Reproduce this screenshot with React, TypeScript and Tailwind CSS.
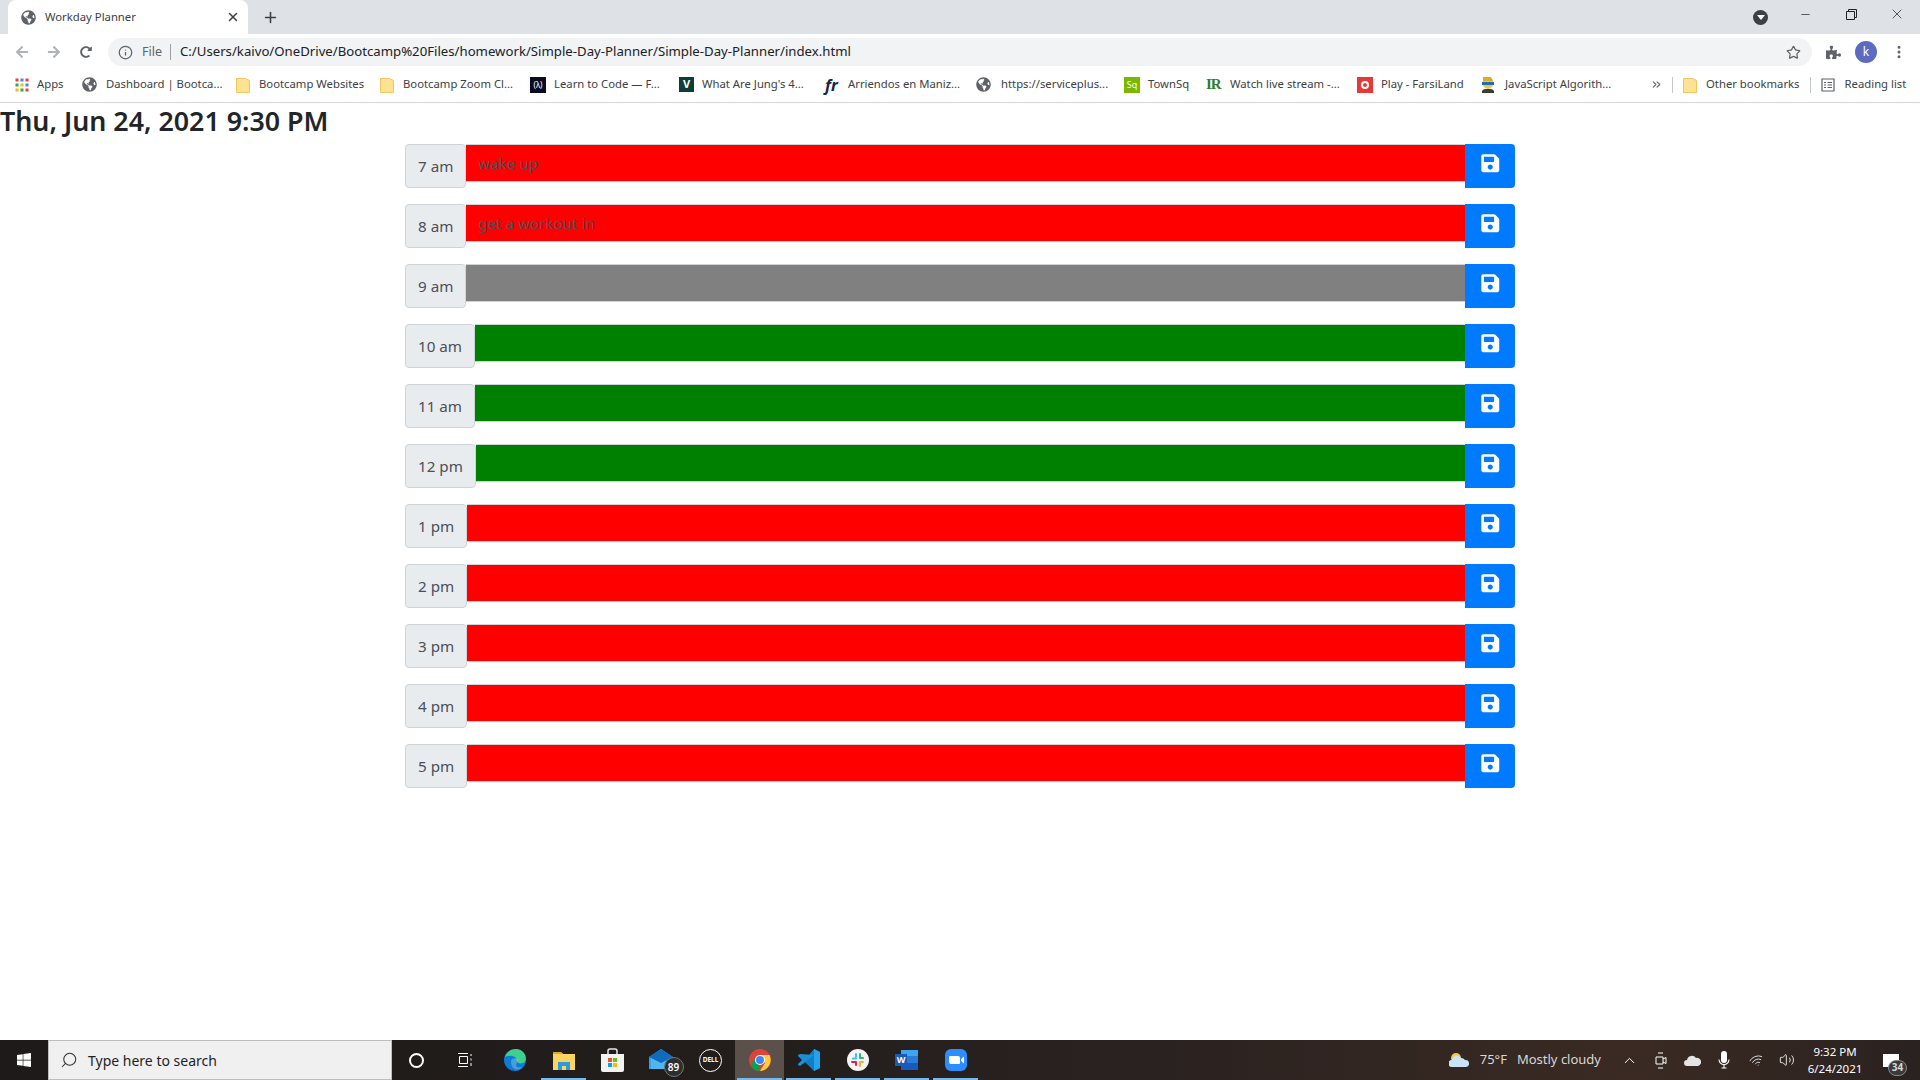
import React from "react";
import {
  FaSave,
  FaGlobeAmericas,
  FaArrowLeft,
  FaArrowRight,
  FaRedoAlt,
  FaPuzzlePiece,
  FaWindows,
} from "react-icons/fa";
import {
  Info,
  Star,
  X,
  Plus,
  Minus,
  Search,
  ChevronUp,
  Volume2,
  Wifi,
  ChevronsRight,
  MoreVertical,
} from "lucide-react";

const UI_FONT = "font-['Noto_Sans','Open_Sans',sans-serif]";

const Folder = () => (
  <svg width="14" height="16" viewBox="0 0 14 16" className="shrink-0">
    <path d="M.5 1.5h9l4 2v12H.5z" fill="#fde293" stroke="#f0c75e" />
  </svg>
);

const Globe = () => <FaGlobeAmericas className="text-[#5f6368] text-[15px] shrink-0" />;

const AppsGrid = () => (
  <svg width="14" height="14" viewBox="0 0 14 14" className="shrink-0">
    {[
      "#ea4335", "#4285f4", "#ea4335",
      "#34a853", "#fbbc04", "#4285f4",
      "#fbbc04", "#34a853", "#ea4335",
    ].map((c, i) => (
      <rect key={i} x={(i % 3) * 5 + 0.5} y={Math.floor(i / 3) * 5 + 0.5} width="3" height="3" fill={c} />
    ))}
  </svg>
);

const bookmarks = [
  { icon: <AppsGrid />, label: "Apps", box: "w-[67px] ml-[15px]", gap: "gap-[8px]" },
  { icon: <Globe />, label: "Dashboard | Bootca...", box: "w-[154px]", gap: "gap-[9px]" },
  { icon: <Folder />, label: "Bootcamp Websites", box: "w-[144px]", gap: "gap-[9px]" },
  { icon: <Folder />, label: "Bootcamp Zoom Cl...", box: "w-[150px]", gap: "gap-[9px]" },
  {
    icon: (
      <span className="w-[16px] h-[16px] bg-[#0a0a23] text-white text-[8px] flex items-center justify-center shrink-0">
        (λ)
      </span>
    ),
    label: "Learn to Code — F...",
    box: "w-[149px]",
    gap: "gap-[8px]",
  },
  {
    icon: (
      <span className="w-[15px] h-[15px] bg-[#0f3d3a] text-white font-bold text-[11px] flex items-center justify-center shrink-0">
        V
      </span>
    ),
    label: "What Are Jung's 4...",
    box: "w-[146px]",
    gap: "gap-[8px]",
  },
  {
    icon: (
      <span className="w-[16px] text-[#14234f] font-bold italic text-[16px] leading-none shrink-0">fr</span>
    ),
    label: "Arriendos en Maniz...",
    box: "w-[151px]",
    gap: "gap-[7px]",
  },
  { icon: <Globe />, label: "https://serviceplus...", box: "w-[148px]", gap: "gap-[10px]" },
  {
    icon: (
      <span className="w-[16px] h-[16px] bg-[#7ab800] text-white text-[9px] flex items-center justify-center shrink-0">
        Sq
      </span>
    ),
    label: "TownSq",
    box: "w-[82px]",
    gap: "gap-[8px]",
  },
  {
    icon: (
      <span className="w-[17px] text-[#2e7d32] font-['Liberation_Serif',serif] font-bold text-[15px] leading-none tracking-[-1px] shrink-0">
        IR
      </span>
    ),
    label: "Watch live stream -...",
    box: "w-[151px]",
    gap: "gap-[7px]",
  },
  {
    icon: (
      <span className="w-[16px] h-[16px] bg-[#e53935] flex items-center justify-center shrink-0">
        <span className="w-[8px] h-[8px] rounded-full border-2 border-white" />
      </span>
    ),
    label: "Play - FarsiLand",
    box: "w-[123px]",
    gap: "gap-[8px]",
  },
  {
    icon: (
      <svg width="16" height="17" viewBox="0 0 16 17" className="shrink-0">
        <path d="M2 15c1-3 11-3 12 0v2H2z" fill="#3b3b2f" />
        <circle cx="8" cy="7" r="5.5" fill="#f5c542" />
        <path d="M2 6h12v3H2z" fill="#1c6fb5" />
        <path d="M3 1h8l2 4H3z" fill="#e0a92a" />
      </svg>
    ),
    label: "JavaScript Algorith...",
    box: "w-[132px]",
    gap: "gap-[9px]",
  },
];

const hours = [
  { label: "7 am", color: "bg-[#ff0000]", text: "wake up" },
  { label: "8 am", color: "bg-[#ff0000]", text: "get a workout in" },
  { label: "9 am", color: "bg-[#808080]", text: "" },
  { label: "10 am", color: "bg-[#008000]", text: "" },
  { label: "11 am", color: "bg-[#008000]", text: "" },
  { label: "12 pm", color: "bg-[#008000]", text: "" },
  { label: "1 pm", color: "bg-[#ff0000]", text: "" },
  { label: "2 pm", color: "bg-[#ff0000]", text: "" },
  { label: "3 pm", color: "bg-[#ff0000]", text: "" },
  { label: "4 pm", color: "bg-[#ff0000]", text: "" },
  { label: "5 pm", color: "bg-[#ff0000]", text: "" },
];

const BrowserChrome = () => (
  <div className={`${UI_FONT} shrink-0`}>
    <div className="h-[34px] bg-[#dee1e6] flex items-end">
      <div className="ml-[8px] w-[240px] h-[34px] bg-white rounded-t-[8px] flex items-center pl-[13px] pr-[8px] text-[11.3px] text-[#3c4043]">
        <FaGlobeAmericas className="text-[#5f6368] text-[15px]" />
        <span className="ml-[9px] flex-1">Workday Planner</span>
        <X size={14} strokeWidth={2.5} className="text-[#3c4043]" />
      </div>
      <Plus size={17} strokeWidth={2.2} className="ml-[14px] mb-[8px] text-[#3c4043]" />
      <div className="ml-auto flex items-start h-full text-[#202124]">
        <div className="w-[15px] h-[15px] mt-[10px] rounded-full bg-[#3c4043] flex items-center justify-center">
          <div className="w-0 h-0 border-x-[4px] border-x-transparent border-t-[5px] border-t-white" />
        </div>
        <Minus size={13} strokeWidth={1.3} className="ml-[31px] mt-[8px]" />
        <svg width="11" height="11" viewBox="0 0 11 11" className="ml-[34px] mt-[9px]" fill="none" stroke="currentColor">
          <path d="M.5 2.5h8v8h-8zM2.5 2.5v-2h8v8h-2" />
        </svg>
        <X size={16} strokeWidth={1.1} className="ml-[32px] mr-[15px] mt-[6px]" />
      </div>
    </div>

    <div className="h-[36px] bg-white flex items-center">
      <FaArrowLeft className="ml-[15px] text-[14px] text-[#b0b3b8]" />
      <FaArrowRight className="ml-[18px] text-[14px] text-[#b0b3b8]" />
      <FaRedoAlt className="ml-[19px] text-[12px] text-[#5f6368]" />
      <div className="ml-[16px] w-[1704px] h-[28px] rounded-full bg-[#f1f3f4] flex items-center pl-[10px] pr-[11px]">
        <Info size={15} className="text-[#5f6368]" />
        <span className="ml-[9px] text-[#5f6368] text-[12.5px]">File</span>
        <span className="ml-[8px] w-px h-[16px] bg-[#9aa0a6]" />
        <span className="ml-[9px] text-[#202124] text-[13.2px]">
          C:/Users/kaivo/OneDrive/Bootcamp%20Files/homework/Simple-Day-Planner/Simple-Day-Planner/index.html
        </span>
        <Star size={15} className="ml-auto text-[#5f6368]" />
      </div>
      <FaPuzzlePiece className="ml-[14px] text-[15px] text-[#5f6368]" />
      <div className="ml-[14px] w-[22px] h-[22px] rounded-full bg-[#5c6bc0] text-white text-[12px] flex items-center justify-center">
        k
      </div>
      <MoreVertical size={16} strokeWidth={2.5} className="ml-[14px] text-[#5f6368]" />
    </div>

    <div className="h-[33px] pb-[3px] bg-white border-b border-[#d4d6d9] flex items-center text-[11.3px] text-[#3c4043]">
      {bookmarks.map((b) => (
        <div key={b.label} className={`${b.box} ${b.gap} flex items-center whitespace-nowrap`}>
          {b.icon}
          <span>{b.label}</span>
        </div>
      ))}
      <ChevronsRight size={13} className="ml-[38px] text-[#5f6368]" />
      <span className="ml-[9px] w-px h-[16px] bg-[#c4c7ca]" />
      <div className="ml-[10px] flex items-center gap-[9px]">
        <Folder />
        <span className="whitespace-nowrap">Other bookmarks</span>
      </div>
      <span className="ml-[10px] w-px h-[16px] bg-[#c4c7ca]" />
      <div className="ml-[10px] flex items-center gap-[10px]">
        <svg width="14" height="14" viewBox="0 0 14 14" fill="none" stroke="#5f6368" strokeWidth="1.2">
          <path d="M1 1h12v12H1zM3 4.5h2M6.5 4.5h4.5M3 7h2M6.5 7h4.5M3 9.5h2M6.5 9.5h4.5" />
        </svg>
        <span className="whitespace-nowrap">Reading list</span>
      </div>
    </div>
  </div>
);

const Planner = () => (
  <div className="flex-1 bg-white font-['Noto_Sans','Open_Sans',sans-serif] text-[#212529]">
    <h1 className="text-[26.8px] font-semibold pt-[2px] leading-[31px] mb-[8px]">Thu, Jun 24, 2021 9:30 PM</h1>
    <div className="w-[1140px] mx-auto px-[15px] flex flex-col gap-[16px]">
      {hours.map((h) => (
        <div key={h.label} className="flex items-start h-[44px]">
          <div className="h-[44px] px-[12px] flex items-center shrink-0 bg-[#e9ecef] border border-[#ced4da] rounded-[4px] text-[15.2px] text-[#495057] whitespace-nowrap">
            {h.label}
          </div>
          <input
            readOnly
            defaultValue={h.text}
            className={`${h.color} flex-1 min-w-0 h-[38px] border-y border-[#ced4da] px-[12px] text-[15.2px] text-[#495057] outline-none`}
          />
          <button className="w-[50px] h-[44px] pb-[6px] shrink-0 bg-[#007bff] rounded-r-[4px] flex items-center justify-center text-white">
            <FaSave className="text-[20.5px]" />
          </button>
        </div>
      ))}
    </div>
  </div>
);

const TaskSlot = ({ children, active, open }: { children: React.ReactNode; active?: boolean; open?: boolean }) => (
  <div className={`relative w-[49px] h-full flex items-center justify-center ${active ? "bg-[#5c504b]" : ""}`}>
    {children}
    {open && <span className="absolute bottom-0 left-[2px] right-[2px] h-[2px] bg-[#76b9ed]" />}
  </div>
);

const Taskbar = () => (
  <div className="h-[40px] shrink-0 flex items-center bg-[linear-gradient(90deg,#1d1a19_0%,#231e1c_40%,#2a2220_60%,#3a2a23_85%,#2a2220_100%)] text-white font-['Noto_Sans','Open_Sans',sans-serif]">
    <div className="w-[48px] flex justify-center">
      <FaWindows className="text-[16px]" />
    </div>
    <div className="w-[344px] h-full bg-[#f0f0f0] border border-[#bdbdbd] flex items-center pl-[11px] text-[14px] text-[#1f1f1f]">
      <Search size={18} strokeWidth={1.4} className="-scale-x-100 text-[#333]" />
      <span className="ml-[10px]">Type here to search</span>
    </div>
    <div className="flex h-full">
      <TaskSlot>
        <span className="w-[15px] h-[15px] rounded-full border-[2.5px] border-white" />
      </TaskSlot>
      <TaskSlot>
        <svg width="16" height="15" viewBox="0 0 16 15" fill="none" stroke="#fff" className="-ml-[2px]">
          <path d="M1 .5h10M2.5 3.5h8v7h-8zM1 13.5h10M14 1v2M14 5.500v2M14 10v3" />
        </svg>
      </TaskSlot>
      <TaskSlot>
        <svg width="24" height="24" viewBox="0 0 24 24">
          <circle cx="12" cy="12" r="11" fill="#0c7cd5" />
          <path d="M2 9C4 1 16-2 21 5c3 4 2 9-1 10-3 1-6 0-6-2 0-4-5-7-12-4z" fill="#3fd08f" />
          <path d="M8 13c0-3 6-4 7-1 0 2-2 3-2 5 0 2 3 3 6 2-3 4-11 4-11-6z" fill="#fff" fillOpacity=".25" />
        </svg>
      </TaskSlot>
      <TaskSlot open>
        <svg width="22" height="20" viewBox="0 0 22 20">
          <path d="M0 2h8l2 2h12v16H0z" fill="#fcd462" />
          <path d="M0 2h8l2 2H0z" fill="#e6a428" />
          <path d="M5 12h12v8H5z" fill="#2b9bde" />
          <path d="M9 16h4v4H9z" fill="#fcd462" />
        </svg>
      </TaskSlot>
      <TaskSlot>
        <svg width="23" height="24" viewBox="0 0 23 24">
          <path d="M7 6V3q0-2 2-2h5q2 0 2 2v3" fill="none" stroke="#e8e8e8" strokeWidth="1.5" />
          <path d="M0 6h23v16q0 2-2 2H2q-2 0-2-2z" fill="#f3f3f3" />
          <path d="M7 10h4v4H7z" fill="#f25022" />
          <path d="M12 10h4v4h-4z" fill="#7fba00" />
          <path d="M7 15h4v4H7z" fill="#00a4ef" />
          <path d="M12 15h4v4h-4z" fill="#ffb900" />
        </svg>
      </TaskSlot>
      <TaskSlot>
        <div className="relative w-[30px] h-[24px] ml-[4px]">
          <svg width="24" height="20" viewBox="0 0 24 20" className="absolute left-0 top-[1px]">
            <path d="M0 8 12 0l12 8v12H0z" fill="#2da3e8" />
            <path d="M0 8l12 7 12-7-12-8z" fill="#0f6cbd" />
            <path d="M2 9 12 14 22 9 22 20 2 20z" fill="#4fb6f2" />
          </svg>
          <span className="absolute right-[-5px] bottom-[-5px] w-[20px] h-[20px] rounded-full bg-[#2b2d30] border border-[#777] text-[10px] font-semibold flex items-center justify-center">
            89
          </span>
        </div>
      </TaskSlot>
      <TaskSlot>
        <div className="w-[23px] h-[23px] rounded-full border-[1.5px] border-white text-[6.5px] font-bold flex items-center justify-center">
          DELL
        </div>
      </TaskSlot>
      <TaskSlot active open>
        <svg width="22" height="22" viewBox="0 0 22 22">
          <circle cx="11" cy="11" r="11" fill="#db4437" />
          <path d="M11 11 11 22A11 11 0 0 1 1.5 16.5L6 9z" fill="#0f9d58" />
          <path d="M11 6h9.500A11 11 0 0 1 11 22l5-8z" fill="#ffcd40" />
          <circle cx="11" cy="11" r="5" fill="#fff" />
          <circle cx="11" cy="11" r="4" fill="#4285f4" />
        </svg>
      </TaskSlot>
      <TaskSlot open>
        <svg width="24" height="24" viewBox="0 0 24 24">
          <path d="M17 1l6 3v16l-6 3L7 13z" fill="#0e7fcb" />
          <path d="M17 1 17 23 23 20V4z" fill="#27a2e8" />
          <path d="M17 7 7 15l-4 3-2-1v-1l4-4-4-4V7l2-1z" fill="#1a8fd9" />
        </svg>
      </TaskSlot>
      <TaskSlot open>
        <svg width="22" height="22" viewBox="0 0 22 22">
          <circle cx="11" cy="11" r="11" fill="#f4f4f4" />
          <path d="M9 5v3M6 9.500h3" stroke="#36c5f0" strokeWidth="2" strokeLinecap="round" />
          <path d="M13 9V5M13 9h3" stroke="#2eb67d" strokeWidth="2" strokeLinecap="round" />
          <path d="M13 13v4M13 13h3" stroke="#ecb22e" strokeWidth="2" strokeLinecap="round" />
          <path d="M9 13H5M9 13v3" stroke="#e01e5a" strokeWidth="2" strokeLinecap="round" />
        </svg>
      </TaskSlot>
      <TaskSlot open>
        <svg width="24" height="22" viewBox="0 0 24 22">
          <path d="M6 1h17v20H6z" fill="#2b7cd3" />
          <path d="M6 1h17v6H6z" fill="#41a5ee" />
          <path d="M6 14h17v7H6z" fill="#185abd" />
          <rect x="0" y="5" width="12" height="12" fill="#185abd" />
          <text x="6" y="14" textAnchor="middle" fontSize="9" fontWeight="700" fill="#fff">W</text>
        </svg>
      </TaskSlot>
      <TaskSlot open>
        <svg width="22" height="22" viewBox="0 0 22 22">
          <rect width="22" height="22" rx="6" fill="#2d8cff" />
          <path d="M4 8q0-1 1-1h8q2 0 2 2v5q0 1-1 1H6q-2 0-2-2zM16 10l3-2.500v7L16 12z" fill="#fff" />
        </svg>
      </TaskSlot>
    </div>
    <div className="ml-auto flex items-center h-full text-[#d8d8d8]">
      <svg width="20" height="16" viewBox="0 0 20 16">
        <circle cx="7" cy="6" r="5" fill="#f7c948" />
        <path d="M3 15a3.500 3.500 0 0 1 0-7 5 5 0 0 1 9-2 4.500 4.500 0 0 1 4 2 3.500 3.500 0 0 1 1 7z" fill="#c9e4f7" />
      </svg>
      <span className="ml-[11px] text-[13px]">75°F</span>
      <span className="ml-[10px] text-[13px] whitespace-nowrap">Mostly cloudy</span>
      <ChevronUp size={17} strokeWidth={1.4} className="ml-[20px] text-white" />
      <svg width="12" height="17" viewBox="0 0 12 17" fill="none" stroke="#fff" className="ml-[17px]">
        <path d="M3 1h5M3 16h5M1 5h7v7H1zM8 7l3-1.500v6L8 10" />
      </svg>
      <svg width="17" height="11" viewBox="0 0 17 11" className="ml-[17px]">
        <path d="M3 11a3 3 0 0 1 0-6 5 5 0 0 1 9-2 4 4 0 0 1 2 8z" fill="#e4e4e4" />
      </svg>
      <svg width="12" height="18" viewBox="0 0 12 18" className="ml-[17px]">
        <rect x="3" y="0" width="6" height="12" rx="3" fill="#fff" />
        <path d="M1 8.500a5 5 0 0 0 10 0M6 13.500V17M3.500 17h5" fill="none" stroke="#fff" strokeWidth="1.1" />
      </svg>
      <Wifi size={15} strokeWidth={1.4} className="ml-[19px] text-[#ddd] -rotate-[20deg]" />
      <Volume2 size={16} strokeWidth={1.3} className="ml-[15px] text-white" />
      <div className="ml-[16px] w-[48px] flex flex-col items-center text-[11.5px] leading-[17px] text-white whitespace-nowrap">
        <span>9:32 PM</span>
        <span>6/24/2021</span>
      </div>
      <div className="relative ml-[24px] mr-[21px] w-[16px] h-[13px] bg-white">
        <span className="absolute right-[-8px] bottom-[-9px] w-[19px] h-[16px] rounded-full bg-[#3a3a3a] border border-[#888] text-[10px] font-bold flex items-center justify-center">
          34
        </span>
      </div>
    </div>
  </div>
);

export default function App() {
  return (
    <div className="h-screen flex flex-col overflow-hidden bg-white">
      <BrowserChrome />
      <Planner />
      <Taskbar />
    </div>
  );
}
